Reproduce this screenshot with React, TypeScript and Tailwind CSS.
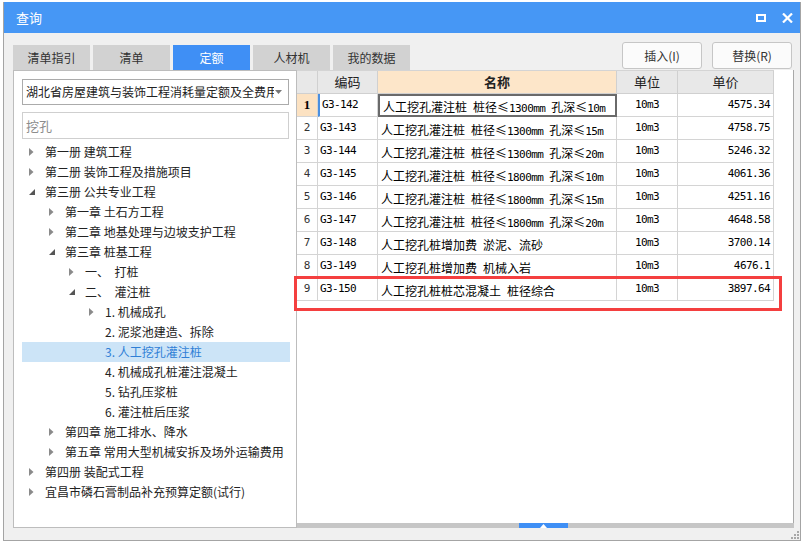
import React from 'react';

type TreeNode = {
  label: string;
  level: number;
  state: 'collapsed' | 'expanded' | 'leaf';
  selected?: boolean;
};

const tree: TreeNode[] = [
  { label: '第一册 建筑工程', level: 0, state: 'collapsed' },
  { label: '第二册 装饰工程及措施项目', level: 0, state: 'collapsed' },
  { label: '第三册 公共专业工程', level: 0, state: 'expanded' },
  { label: '第一章 土石方工程', level: 1, state: 'collapsed' },
  { label: '第二章 地基处理与边坡支护工程', level: 1, state: 'collapsed' },
  { label: '第三章 桩基工程', level: 1, state: 'expanded' },
  { label: '一、  打桩', level: 2, state: 'collapsed' },
  { label: '二、  灌注桩', level: 2, state: 'expanded' },
  { label: '1. 机械成孔', level: 3, state: 'collapsed' },
  { label: '2. 泥浆池建造、拆除', level: 3, state: 'leaf' },
  { label: '3. 人工挖孔灌注桩', level: 3, state: 'leaf', selected: true },
  { label: '4. 机械成孔桩灌注混凝土', level: 3, state: 'leaf' },
  { label: '5. 钻孔压浆桩', level: 3, state: 'leaf' },
  { label: '6. 灌注桩后压浆', level: 3, state: 'leaf' },
  { label: '第四章 施工排水、降水', level: 1, state: 'collapsed' },
  { label: '第五章 常用大型机械安拆及场外运输费用', level: 1, state: 'collapsed' },
  { label: '第四册 装配式工程', level: 0, state: 'collapsed' },
  { label: '宜昌市磷石膏制品补充预算定额(试行)', level: 0, state: 'collapsed' },
];

const rows = [
  ['G3-142', '人工挖孔灌注桩 桩径≤1300mm 孔深≤10m', '10m3', '4575.34'],
  ['G3-143', '人工挖孔灌注桩 桩径≤1300mm 孔深≤15m', '10m3', '4758.75'],
  ['G3-144', '人工挖孔灌注桩 桩径≤1300mm 孔深≤20m', '10m3', '5246.32'],
  ['G3-145', '人工挖孔灌注桩 桩径≤1800mm 孔深≤10m', '10m3', '4061.36'],
  ['G3-146', '人工挖孔灌注桩 桩径≤1800mm 孔深≤15m', '10m3', '4251.16'],
  ['G3-147', '人工挖孔灌注桩 桩径≤1800mm 孔深≤20m', '10m3', '4648.58'],
  ['G3-148', '人工挖孔桩增加费 淤泥、流砂', '10m3', '3700.14'],
  ['G3-149', '人工挖孔桩增加费 机械入岩', '10m3', '4676.1'],
  ['G3-150', '人工挖孔桩桩芯混凝土 桩径综合', '10m3', '3897.64'],
];

const tabs = ['清单指引', '清单', '定额', '人材机', '我的数据'];

const mono = "font-['DejaVu_Sans_Mono',monospace] text-[11px] tracking-[-0.6px]";

// ascii parts in a mono face, the rest in the CJK face (like SimSun's half width digits)
function Mixed({ text }: { text: string }) {
  const parts = text.match(/[\x20-\x7E]+|[^\x20-\x7E]+/g) || [];
  return (
    <span className="whitespace-pre">
      {parts.map((p, i) =>
        /^[\x20-\x7E]+$/.test(p) ? (
          <span key={i} className={mono}>
            {p}
          </span>
        ) : (
          <span key={i} className="font-['Noto_Sans_CJK_SC',sans-serif] text-[12px]">
            {p}
          </span>
        )
      )}
    </span>
  );
}

function Arrow({ state }: { state: TreeNode['state'] }) {
  if (state === 'leaf') return null;
  if (state === 'collapsed') {
    return (
      <svg width="5" height="8" viewBox="0 0 5 8">
        <path d="M0 0 L4.5 4 L0 8 Z" fill="#8a8a8a" />
      </svg>
    );
  }
  return (
    <svg width="6" height="6" viewBox="0 0 6 6">
      <path d="M6 0 L6 6 L0 6 Z" fill="#555" />
    </svg>
  );
}

export default function App() {
  return (
    <div className="w-[804px] h-[543px] bg-white pt-[2px] pl-[3px] overflow-hidden font-['Noto_Sans_CJK_SC','Noto_Sans',sans-serif] text-[#222]">
      <div className="w-[798px] h-[539px] bg-[#f0f0f0] border-x border-b border-[#a4a4a4] flex flex-col">
        {/* title bar */}
        <div className="h-[31px] bg-[#4697f5] flex items-center justify-between pl-[12px] pr-[7px]">
          <span className="text-white text-[13px] pt-[1px]">查询</span>
          <div className="flex items-center gap-[16px]">
            <div className="w-[10px] h-[8px] border-2 border-white" />
            <svg width="11" height="10" viewBox="0 0 11 10">
              <path d="M1 0.5 L10 9.5 M10 0.5 L1 9.5" stroke="white" strokeWidth="2.2" />
            </svg>
          </div>
        </div>

        {/* tabs + buttons */}
        <div className="h-[37px] flex items-end justify-between pl-[9px] pr-[8px]">
          <div className="flex gap-[3px]">
            {tabs.map((t) => (
              <div
                key={t}
                className={`w-[77px] h-[25px] flex items-center justify-center text-[12px] ${
                  t === '定额' ? 'bg-[#3f8ff5] text-white' : 'bg-[#d2d2d2] text-[#333]'
                }`}
              >
                {t}
              </div>
            ))}
          </div>
          <div className="flex gap-[10px] mb-[1px]">
            <button className="w-[80px] h-[27px] bg-[#fbfbfb] border border-[#c6c6c6] rounded-[3px] text-[12px] text-[#333]">
              插入(I)
            </button>
            <button className="w-[80px] h-[27px] bg-[#fbfbfb] border border-[#c6c6c6] rounded-[3px] text-[12px] text-[#333]">
              替换(R)
            </button>
          </div>
        </div>

        {/* main */}
        <div className="flex pl-[9px] pr-[6px] h-[458px]">
          {/* left panel */}
          <div className="w-[284px] h-[458px] bg-white border border-[#bdbdbd] pt-[8px] px-[8px]">
            <div className="w-[267px] h-[26px] border border-[#ababab] flex items-center pl-[3px] pr-[6px] justify-between">
              <div className="w-[248px] overflow-hidden whitespace-nowrap text-[12px] text-[#222]">
                湖北省房屋建筑与装饰工程消耗量定额及全费用基价表
              </div>
              <svg width="7" height="4" viewBox="0 0 7 4">
                <path d="M0 0 L7 0 L3.5 4 Z" fill="#777" />
              </svg>
            </div>
            <input
              placeholder="挖孔"
              className="mt-[7px] w-[267px] h-[27px] border border-[#cfcfcf] px-[3px] text-[13px] outline-none placeholder:text-[#8c8c8c]"
            />
            <div className="mt-[3px] w-[268px]">
              {tree.map((n) => (
                <div
                  key={n.label}
                  className={`h-[20px] flex items-center text-[12px] ${
                    n.selected ? 'bg-[#cce4f7] text-[#2f7fd6]' : 'text-[#222]'
                  }`}
                >
                  <div style={{ width: n.level * 20 }} />
                  <div className="w-[23px] h-[20px] flex items-center pl-[7px]">
                    <Arrow state={n.state} />
                  </div>
                  <span className="whitespace-pre">{n.label}</span>
                </div>
              ))}
            </div>
          </div>

          {/* table area */}
          <div className="w-[497px] h-[458px] flex flex-col">
            <div className="relative h-[453px] bg-white border-r border-[#a9a9a9]">
              <div className="border-t border-[#d4d4d4] w-[477px]">
                {/* header */}
                <div className="flex h-[23px] text-[13px] text-[#222]">
                  <div className="w-[21px] bg-[#e8e8e8] border-r border-b border-[#d0d0d0]" />
                  <div className="w-[60px] bg-[#e8e8e8] border-r border-b border-[#d0d0d0] flex items-center justify-center">
                    编码
                  </div>
                  <div className="w-[239px] bg-[#fde6c9] border-r border-b border-[#d0d0d0] flex items-center justify-center font-bold">
                    名称
                  </div>
                  <div className="w-[61px] bg-[#e8e8e8] border-r border-b border-[#d0d0d0] flex items-center justify-center">
                    单位
                  </div>
                  <div className="w-[96px] bg-[#e8e8e8] border-r border-b border-[#d0d0d0] flex items-center justify-center">
                    单价
                  </div>
                </div>
                {rows.map((r, i) => (
                  <div key={r[0]} className="flex h-[23px] text-black">
                    <div
                      className={`w-[21px] border-r border-b border-[#d4d4d4] flex items-center justify-center ${
                        i === 0
                          ? "bg-[#fce2c2] font-['Liberation_Serif',serif] font-bold text-[13px]"
                          : "font-['DejaVu_Sans_Mono',monospace] text-[11px] text-[#333]"
                      }`}
                    >
                      {i + 1}
                    </div>
                    <div
                      className={`w-[60px] border-r border-b border-[#d4d4d4] flex items-center pl-[2px] ${mono} ${
                        i === 0 ? 'border-l-2 border-l-[#4a8fe0]' : ''
                      }`}
                    >
                      {r[0]}
                    </div>
                    <div
                      className={`w-[239px] flex items-center pl-[3px] ${
                        i === 0 ? 'border-2 border-[#6a6a6a]' : 'border-r border-b border-[#d4d4d4]'
                      }`}
                    >
                      <Mixed text={r[1]} />
                    </div>
                    <div className={`w-[61px] border-r border-b border-[#d4d4d4] flex items-center justify-center ${mono}`}>
                      {r[2]}
                    </div>
                    <div className={`w-[96px] border-r border-b border-[#d4d4d4] flex items-center justify-end pr-[3px] ${mono}`}>
                      {r[3]}
                    </div>
                  </div>
                ))}
              </div>
              {/* annotation box */}
              <div className="absolute left-[-3px] top-[206px] w-[488px] h-[35px] border-[3px] border-[#f43f3f]" />
            </div>
            {/* splitter */}
            <div className="h-[5px] bg-[#c6c6c6] flex">
              <div className="ml-[222px] w-[49px] h-[5px] bg-[#3f8ff5] flex items-center justify-center">
                <svg width="7" height="4" viewBox="0 0 7 4">
                  <path d="M0 4 L3.5 0 L7 4 Z" fill="white" />
                </svg>
              </div>
            </div>
          </div>
        </div>

        {/* bottom with resize grip */}
        <div className="flex-1 flex justify-end items-end pr-[1px] pb-[1px]">
          <svg width="8" height="8" viewBox="0 0 8 8">
            <rect x="6" y="0" width="2" height="2" fill="#a8a8a8" />
            <rect x="3" y="3" width="2" height="2" fill="#a8a8a8" />
            <rect x="6" y="3" width="2" height="2" fill="#a8a8a8" />
            <rect x="0" y="6" width="2" height="2" fill="#a8a8a8" />
            <rect x="3" y="6" width="2" height="2" fill="#a8a8a8" />
            <rect x="6" y="6" width="2" height="2" fill="#a8a8a8" />
          </svg>
        </div>
      </div>
    </div>
  );
}
